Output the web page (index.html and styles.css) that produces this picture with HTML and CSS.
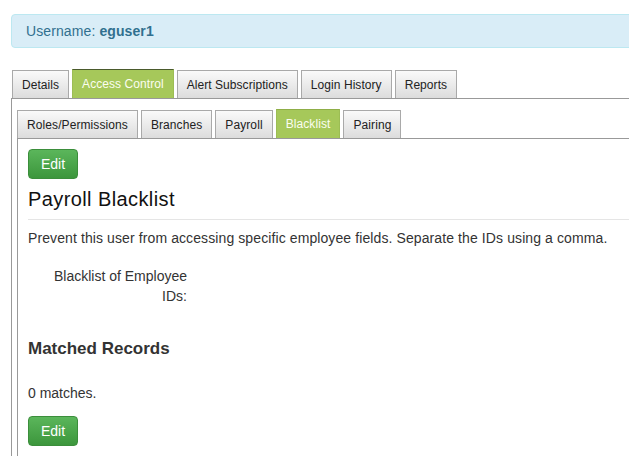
FILE: index.html
```html
<!DOCTYPE html>
<html>
<head>
<meta charset="utf-8">
<link rel="stylesheet" href="styles.css">
</head>
<body>
<div class="page">
  <div class="alert">Username: <strong>eguser1</strong></div>

  <div class="tabset outer">
    <ul class="tabs">
      <li class="tab">Details</li>
      <li class="tab active">Access Control</li>
      <li class="tab">Alert Subscriptions</li>
      <li class="tab">Login History</li>
      <li class="tab">Reports</li>
    </ul>
    <div class="pane outer-pane">
      <div class="tabset inner">
        <ul class="tabs">
          <li class="tab">Roles/Permissions</li>
          <li class="tab">Branches</li>
          <li class="tab">Payroll</li>
          <li class="tab active">Blacklist</li>
          <li class="tab">Pairing</li>
        </ul>
        <div class="pane inner-pane">
          <button class="btn">Edit</button>
          <h2 class="title">Payroll Blacklist</h2>
          <hr class="rule">
          <p class="desc">Prevent this user from accessing specific employee fields. Separate the IDs using a comma.</p>
          <div class="field">
            <div class="label">Blacklist of Employee IDs:</div>
          </div>
          <h3 class="subtitle">Matched Records</h3>
          <p class="matches">0 matches.</p>
          <button class="btn">Edit</button>
        </div>
      </div>
    </div>
  </div>
</div>
</body>
</html>
```

FILE: styles.css
```css
html, body {
  margin: 0;
  padding: 0;
  overflow: hidden;
  background: #fff;
}
body {
  font-family: "Liberation Sans", Arial, sans-serif;
  font-size: 14px;
  color: #333;
}
.page {
  width: 660px;
  padding: 14px 0 0 11px;
}
.alert {
  height: 32px;
  border: 1px solid #bce8f1;
  background: #d9edf7;
  border-radius: 4px;
  color: #31708f;
  font-size: 14px;
  display: flex;
  align-items: center;
  padding: 0 14px;
  letter-spacing: 0.1px;
}
.alert strong {
  margin-left: 4px;
}
.tabset.outer {
  margin-top: 21px;
}
.tabs {
  list-style: none;
  margin: 0;
  padding: 0 0 0 1px;
  display: flex;
  align-items: flex-end;
  gap: 3px;
  border-bottom: 1px solid #999;
}
.tab {
  height: 27px;
  display: flex;
  align-items: center;
  padding: 0 9px;
  font-size: 12px;
  letter-spacing: 0.06px;
  color: #222;
  border: 1px solid #a9a9a9;
  border-bottom: none;
  background: linear-gradient(#fafafa, #dcdcdc);
}
.tab.active {
  height: 28px;
  background: #a6c85a;
  color: #fbfdf0;
  border-color: #9cbd54;
  border-top-color: #4a5a2c;
}
.inner .tab {
  letter-spacing: 0.09px;
}
.inner .tab.active {
  border-top-color: #8fae48;
}
.pane {
  border-left: 1px solid #999;
}
.outer-pane {
  padding: 10px 0 0 5px;
}
.inner .tabs {
  padding-left: 0;
}
.inner-pane {
  padding: 10px 0 40px 10px;
  min-height: 320px;
}
.btn {
  display: block;
  width: 50px;
  height: 30px;
  border: 1px solid #3b8e3b;
  border-radius: 4px;
  background: linear-gradient(#5bb65b, #3c963c);
  color: #fff;
  font-family: "Liberation Sans", Arial, sans-serif;
  font-size: 14px;
  padding: 0;
  margin: 0;
}
.title {
  margin: 8px 0 0;
  font-size: 20px;
  font-weight: normal;
  line-height: 24px;
  letter-spacing: 0.4px;
  color: #111;
}
.rule {
  margin: 8px 0 0;
  border: none;
  border-top: 1px solid #e5e5e5;
  height: 0;
}
.desc {
  margin: 8px 0 0;
  line-height: 20px;
  letter-spacing: 0.1px;
}
.field {
  margin-top: 18px;
}
.label {
  width: 159px;
  text-align: right;
  line-height: 20px;
}
.subtitle {
  margin: 33px 0 0;
  font-size: 17px;
  line-height: 20px;
  font-weight: bold;
  color: #333;
}
.matches {
  margin: 24px 0 0;
  line-height: 20px;
}
.matches + .btn {
  margin-top: 13px;
}
```
